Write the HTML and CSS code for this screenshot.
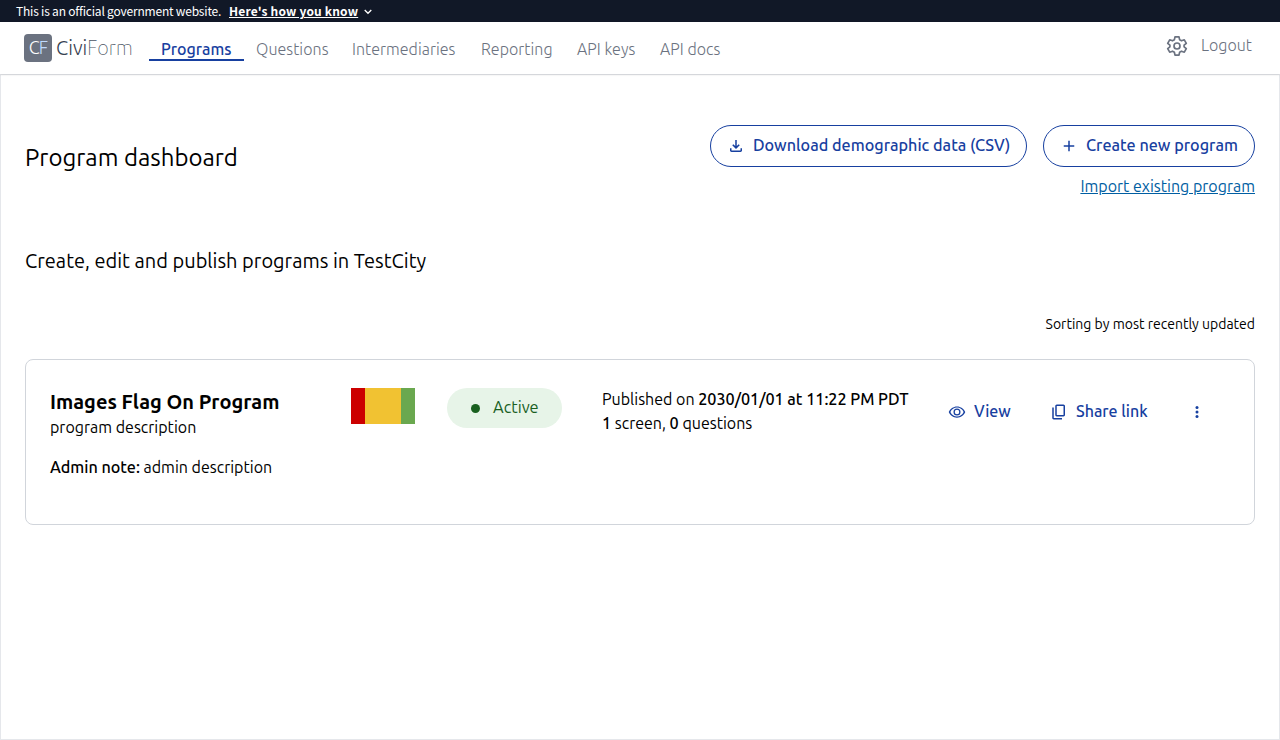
FILE: index.html
```html
<!DOCTYPE html>
<html lang="en">
<head>
<meta charset="utf-8">
<title>Program dashboard</title>
<link rel="stylesheet" href="styles.css">
</head>
<body>
<div class="banner"><span class="banner-text">This is an official government website.</span><a class="banner-link">Here's how you know</a><svg class="chevron" viewBox="0 0 8 6"><path d="M.7 1l3.300 3.300L7.300 1"/></svg></div>
<header class="header">
  <div class="logo"><span class="logo-mark">C<i>F</i></span><span class="logo-name">Civi<i>Form</i></span></div>
  <nav class="nav">
    <a class="tab tab-programs">Programs</a>
    <a class="tab tab-questions">Questions</a>
    <a class="tab tab-inter">Intermediaries</a>
    <a class="tab tab-reporting">Reporting</a>
    <a class="tab tab-keys">API keys</a>
    <a class="tab tab-docs">API docs</a>
  </nav>
  <div class="account">
    <svg class="gear" viewBox="0 0 24 24"><path d="M10 2.800h4l.6 2.900 1.900 1.100 2.800-1 2 3.500-2.200 1.900v1.600l2.200 1.900-2 3.500-2.800-1-1.900 1.100-.6 2.900h-4l-.6-2.900-1.900-1.100-2.800 1-2-3.500 2.200-1.900v-1.600L2.700 9.300l2-3.500 2.800 1 1.900-1.100z"/><circle cx="12" cy="12" r="3"/></svg>
    <a class="logout">Logout</a>
  </div>
</header>
<main class="main">
  <div class="top">
    <h1 class="title">Program dashboard</h1>
    <div class="actions">
      <div class="buttons">
        <button class="button button-download"><svg viewBox="0 0 24 24"><path d="M12 16l-5-5 1.400-1.450 2.600 2.600V4h2v8.150l2.600-2.600L17 11zm-6 4q-.825 0-1.412-.587T4 18v-3h2v3h12v-3h2v3q0 .825-.587 1.413T18 20z"/></svg><span>Download demographic data (CSV)</span></button>
        <button class="button button-create"><svg viewBox="0 0 24 24"><path d="M19 13h-6v6h-2v-6H5v-2h6V5h2v6h6z"/></svg><span>Create new program</span></button>
      </div>
      <a class="import">Import existing program</a>
    </div>
  </div>
  <h2 class="subtitle">Create, edit and publish programs in TestCity</h2>
  <p class="sorting">Sorting by most recently updated</p>
  <section class="card">
    <div class="info">
      <h3 class="name">Images Flag On Program</h3>
      <p class="desc">program description</p>
      <p class="note"><b>Admin note:</b> admin description</p>
    </div>
    <svg class="thumb" viewBox="0 0 64 36"><path fill="#c00" d="M0 0h14v36H0z"/><path fill="#f1c232" d="M14 0h36v36H14z"/><path fill="#6aa84f" d="M50 0h14v36H50z"/></svg>
    <div class="status"><i class="dot"></i><span>Active</span></div>
    <div class="published">
      <p class="date">Published on <b>2030/01/01 at 11:22 PM PDT</b></p>
      <p class="counts"><b>1</b> screen, <b>0</b> questions</p>
    </div>
    <div class="row-actions">
      <a class="action view"><svg viewBox="0 0 24 24"><path d="M12 6c3.790 0 7.170 2.130 8.820 6-1.650 3.870-5.030 6-8.820 6S4.830 15.870 3.180 12C4.830 8.130 8.210 6 12 6m0-1.500C7 4.500 2.730 7.610 1 12c1.730 4.390 6 7.500 11 7.500s9.270-3.110 11-7.500c-1.730-4.390-6-7.500-11-7.500m0 4.500a3 3 0 010 6 3 3 0 010-6m0-1.700a4.700 4.700 0 000 9.400 4.700 4.700 0 000-9.400"/></svg><span>View</span></a>
      <a class="action share"><svg viewBox="0 0 24 24"><path d="M9 18q-.825 0-1.412-.587T7 16V4q0-.825.588-1.412T9 2h9q.825 0 1.413.588T20 4v12q0 .825-.587 1.413T18 18zm0-2h9V4H9zm-4 6q-.825 0-1.412-.587T3 20V6h2v14h11v2z"/></svg><span>Share link</span></a>
      <svg class="more" viewBox="0 0 24 24"><circle cx="12" cy="6" r="2"/><circle cx="12" cy="12" r="2"/><circle cx="12" cy="18" r="2"/></svg>
    </div>
  </section>
</main>
</body>
</html>
```
FILE: styles.css
```css
* { box-sizing: border-box; margin: 0; padding: 0; }
body { height: 740px; display: flex; flex-direction: column; font: 300 16.2px/24px Ubuntu, "Noto Sans", "Open Sans", sans-serif; color: #000; background: #fff; white-space: nowrap; overflow: hidden; }
i { font-style: normal; }
b { font-weight: 500; }
.banner { height: 22px; background: #111827; color: #fff; display: flex; align-items: center; padding-left: 16px; font: 400 12px/22px "Source Sans Pro", "Noto Sans CJK SC", sans-serif; }
.banner-text { width: 213px; letter-spacing: -.2px; }
.banner-link { margin-right: 6px; font-weight: 700; letter-spacing: .17px; text-decoration: underline; }
.chevron { width: 8px; height: 6px; margin-top: 2px; fill: none; stroke: #fff; stroke-width: 1.3; }
.header { height: 52px; display: flex; padding: 0 24px; font-size: 16px; color: #6b7280; box-shadow: 0 1px 2px rgba(0,0,0,.1); z-index: 1; }
.logo { width: 125px; display: flex; padding-top: 12px; }
.logo-mark { width: 28px; height: 28px; border-radius: 4px; background: #6b7280; color: #fff; font-size: 18px; line-height: 27px; text-align: center; letter-spacing: -1px; }
.logo-mark i { color: #bfdbfe; }
.logo-name { margin-left: 4px; font-size: 20px; line-height: 28px; color: #374151; letter-spacing: .04px; }
.logo-name i { font-weight: 100; color: #4b5563; }
.nav { display: flex; padding-top: 15px; }
.tab { height: 24px; padding-left: 12px; letter-spacing: .05px; }
.tab-programs { width: 95px; border-bottom: 2px solid #1740a0; color: #1740a0; font-weight: 500; letter-spacing: 0; }
.tab-questions { width: 96px; }
.tab-inter { width: 129px; }
.tab-reporting { width: 96px; }
.tab-keys { width: 83px; }
.account { margin-left: auto; width: 91px; display: flex; gap: 12px; padding-top: 11px; }
.gear { width: 24px; height: 24px; margin-top: 1px; fill: none; stroke: #6b7280; stroke-width: 1.7; stroke-linejoin: round; }
.main { flex: 1; border: 1px solid #e5e7eb; padding: 50px 24px; }
.top { height: 126px; display: flex; justify-content: space-between; }
.title { font-size: 24px; font-weight: 400; line-height: 32px; padding-top: 17px; }
.actions { display: flex; flex-direction: column; align-items: flex-end; }
.buttons { display: flex; gap: 16px; }
.button { height: 42px; border: 1px solid #1740a0; border-radius: 21px; background: #fff; color: #1740a0; display: flex; align-items: center; padding-left: 16px; font: 500 16.2px/24px Ubuntu, "Noto Sans", sans-serif; }
.button svg { width: 18px; height: 18px; margin-right: 8px; fill: #1740a0; }
.button span, .action span, .status span { padding-bottom: 2px; }
.button-download { width: 317px; }
.button-create { width: 212px; }
.import { margin-top: 7px; font-size: 16px; font-weight: 400; color: #005ea2; text-decoration: underline; }
.subtitle { font-size: 20px; font-weight: 400; line-height: 28px; margin-top: -4px; }
.sorting { margin-top: 39px; line-height: 20px; font-size: 14px; font-weight: 400; text-align: right; }
.card { height: 166px; margin-top: 25px; border: 1px solid #d1d5db; border-radius: 8px; display: flex; padding: 28px 24px; }
.info { width: 301px; }
.name { font-size: 20px; font-weight: 600; line-height: 28px; }
.desc { margin-top: -1px; font-size: 16px; font-weight: 400; }
.note { margin-top: 16px; font-size: 16px; font-weight: 400; }
.note b, .published b { font-size: 16.2px; line-height: 20px; letter-spacing: -.03px; }
.thumb { width: 64px; height: 36px; }
.status { width: 115px; height: 40px; margin-left: 32px; border-radius: 20px; background: #e7f4e8; color: #19601f; display: flex; align-items: center; padding-left: 24px; font-size: 16.4px; font-weight: 400; }
.dot { width: 9px; height: 9px; border-radius: 50%; background: #19601f; margin-right: 13px; }
.published { width: 346px; margin: -1px 0 0 40px; font-size: 16px; font-weight: 400; }
.row-actions { display: flex; height: 48px; align-items: center; color: #1740a0; font-size: 16px; font-weight: 500; }
.row-actions svg { width: 18px; height: 18px; fill: #1740a0; margin-right: 8px; }
.action { display: flex; align-items: center; }
.view { width: 102px; }
.share { width: 138px; }
```
